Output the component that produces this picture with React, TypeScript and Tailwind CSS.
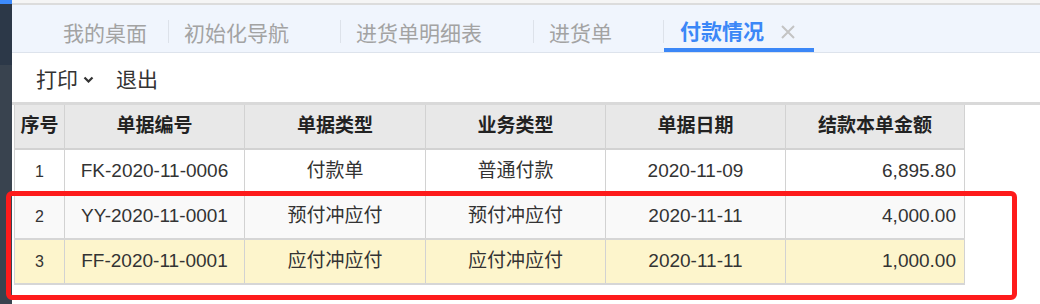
const tabs = [
  { label: "我的桌面", first: true },
  { label: "初始化导航" },
  { label: "进货单明细表" },
  { label: "进货单" },
];

const cols = "grid grid-cols-[51px_180px_181px_180px_180px_179px]";

const rows = [
  { no: "1", code: "FK-2020-11-0006", kind: "付款单", biz: "普通付款", date: "2020-11-09", amt: "6,895.80", bg: "bg-white" },
  { no: "2", code: "YY-2020-11-0001", kind: "预付冲应付", biz: "预付冲应付", date: "2020-11-11", amt: "4,000.00", bg: "bg-[#f9f9f9]" },
  { no: "3", code: "FF-2020-11-0001", kind: "应付冲应付", biz: "应付冲应付", date: "2020-11-11", amt: "1,000.00", bg: "bg-[#fdf5cc]" },
];

function Sep() {
  return <span className="w-px h-[23px] bg-[#dde2ea] mt-[6px] self-center" />;
}

export default function App() {
  return (
    <div
      className="relative flex w-[1040px] h-[304px] overflow-hidden bg-white"
      style={{ fontFamily: '"Liberation Sans", "Noto Sans CJK SC", sans-serif' }}
    >
      {/* side strip */}
      <div className="w-[12px] flex flex-col">
        <div className="h-[4px] bg-[#3d8bfd]" />
        <div className="h-[61px] bg-[#2c3848]" />
        <div className="flex-1 bg-[#39434f]" />
      </div>

      <div className="flex-1 flex flex-col">
        <div className="h-[3px] bg-[#f5f5f5]" />
        <div className="h-[2px] bg-[#dcdcdc]" />

        {/* tabs */}
        <div
          className="h-[48px] bg-[#f0f5fd] border-b border-[#dde3ec] flex pl-[35px] text-[21px]"
          style={{ fontFamily: '"Noto Sans CJK SC", sans-serif' }}
        >
          {tabs.map((t) => (
            <div key={t.label} className="flex h-full">
              {!t.first && <Sep />}
              <div
                className={`flex items-center pt-[9px] text-[#a3a3a3] ${t.first ? "pl-4 pr-[21px]" : "pl-[15px] pr-[51px]"}`}
              >
                {t.label}
              </div>
            </div>
          ))}
          <div className="flex h-full">
            <Sep />
            <div className="flex items-center pt-[9px] pl-[16px] pr-[19px] text-[#3b87f7] font-bold border-b-4 border-[#3b87f7]">
              付款情况
              <svg className="ml-[17px] mt-[1px]" width="14" height="14" viewBox="0 0 14 14">
                <path d="M1 1L13 13M13 1L1 13" stroke="#c4c4c4" strokeWidth="2" />
              </svg>
            </div>
          </div>
        </div>

        {/* toolbar */}
        <div
          className="h-[49px] flex items-center pl-[24px] pt-[2px] text-[21px] text-[#333]"
          style={{ fontFamily: '"Noto Sans CJK SC", sans-serif' }}
        >
          <span>打印</span>
          <svg className="ml-[5px] mt-[2px]" width="11" height="7" viewBox="0 0 11 7">
            <path d="M1.5 1.5L5.5 5.5L9.5 1.5" stroke="#333" strokeWidth="2.2" fill="none" />
          </svg>
          <span className="ml-[22px]">退出</span>
        </div>

        {/* table */}
        <div className="border-t-[3px] border-[#d9d9d9] pl-[2px] text-[19px] text-[#333]">
          <div className="w-[951px]">
            <div className={`${cols} h-[45px] bg-[#e8e8e8] border-b-2 border-[#d2d2d2] font-bold text-[#222]`}>
              {["序号", "单据编号", "单据类型", "业务类型", "单据日期", "结款本单金额"].map((h, i) => (
                <div
                  key={h}
                  className={`flex items-center justify-center border-r border-[#d2d2d2] ${i === 0 ? "border-l" : ""}`}
                >
                  {h}
                </div>
              ))}
            </div>
            {rows.map((r) => (
              <div key={r.no} className={`${cols} h-[45px] ${r.bg} border-b-2 border-[#d6d6d6]`}>
                <div className="flex items-center justify-center border-l border-r border-[#d2d2d2] text-[16px]">{r.no}</div>
                <div className="flex items-center justify-center border-r border-[#d2d2d2]">{r.code}</div>
                <div className="flex items-center justify-center border-r border-[#d2d2d2]">{r.kind}</div>
                <div className="flex items-center justify-center border-r border-[#d2d2d2]">{r.biz}</div>
                <div className="flex items-center justify-center border-r border-[#d2d2d2]">{r.date}</div>
                <div className="flex items-center justify-end pr-[8px] border-r border-[#d2d2d2]">{r.amt}</div>
              </div>
            ))}
          </div>
        </div>
      </div>

      {/* highlight box */}
      <div className="absolute left-[6px] top-[191px] w-[1011px] h-[109px] border-[5px] border-[#fe1b1b] rounded-[6px]" />
    </div>
  );
}
